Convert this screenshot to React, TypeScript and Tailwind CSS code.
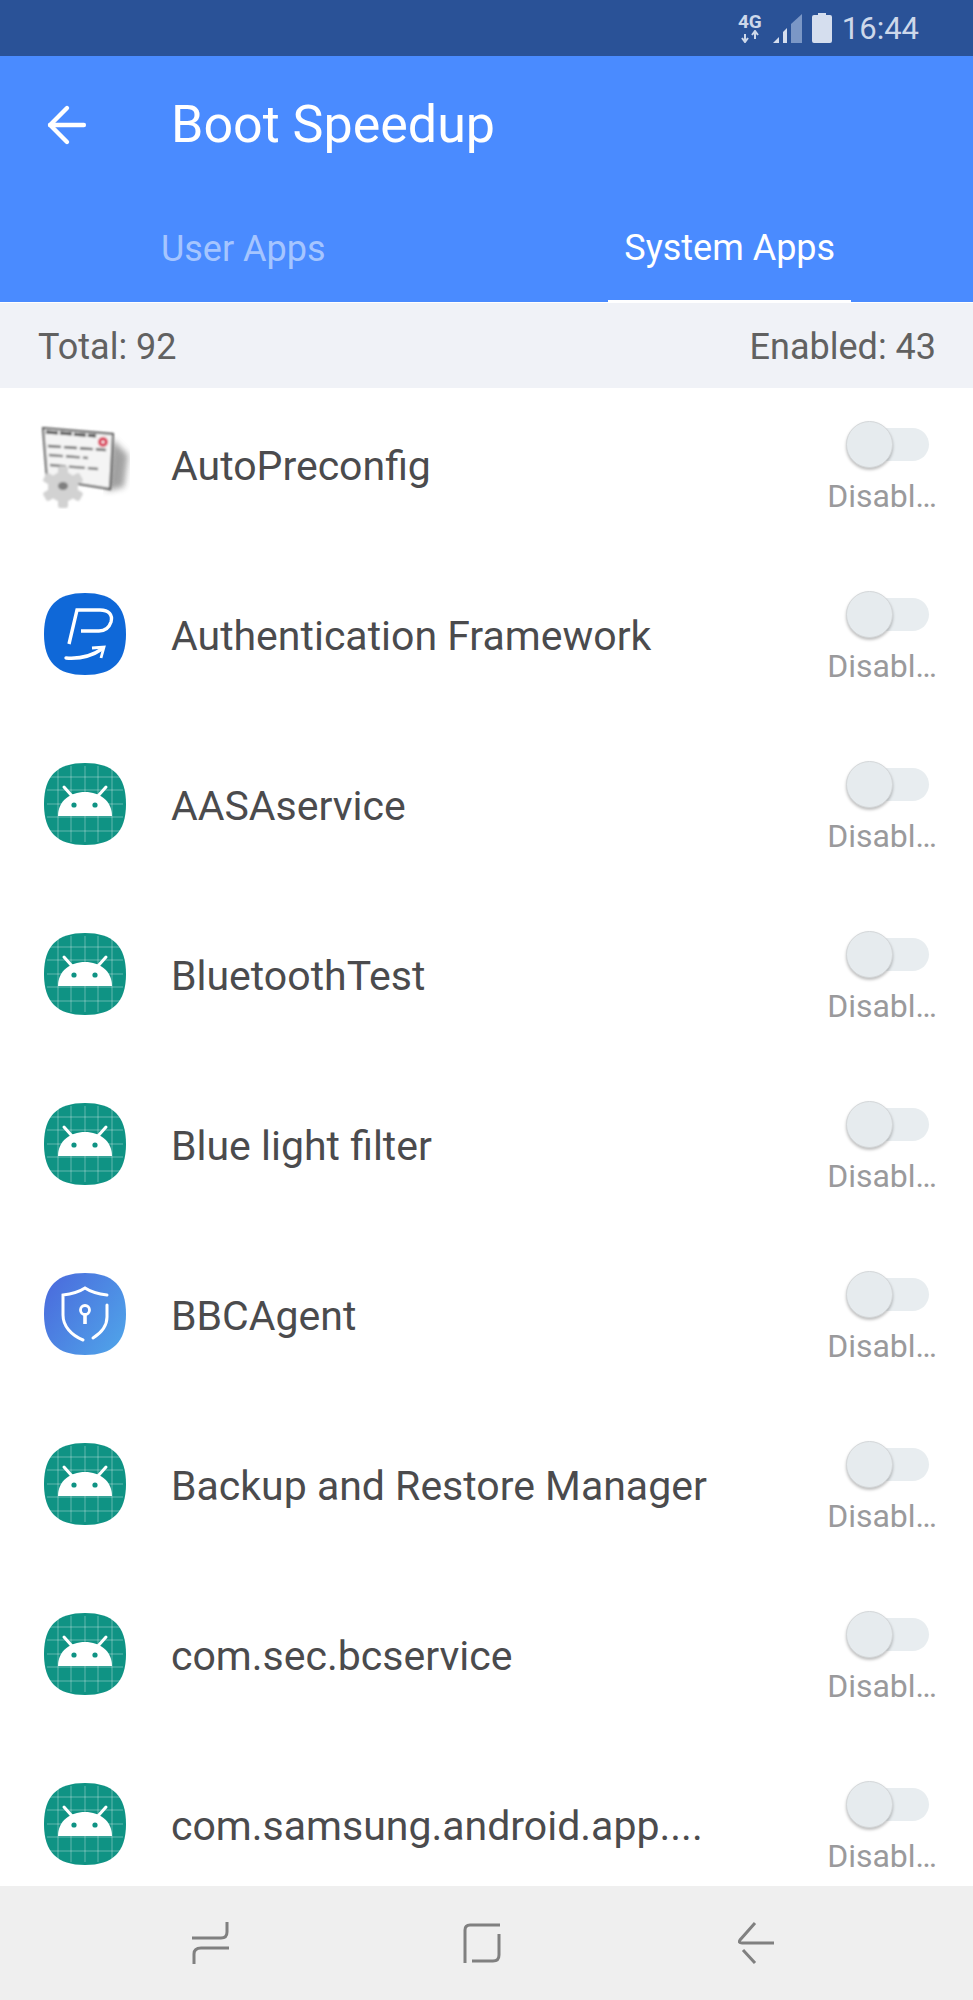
import { ArrowLeft } from 'lucide-react'

type IconKind = 'config' | 'auth' | 'android' | 'shield'

const apps: { name: string; icon: IconKind }[] = [
  { name: 'AutoPreconfig', icon: 'config' },
  { name: 'Authentication Framework', icon: 'auth' },
  { name: 'AASAservice', icon: 'android' },
  { name: 'BluetoothTest', icon: 'android' },
  { name: 'Blue light filter', icon: 'android' },
  { name: 'BBCAgent', icon: 'shield' },
  { name: 'Backup and Restore Manager', icon: 'android' },
  { name: 'com.sec.bcservice', icon: 'android' },
  { name: 'com.samsung.android.app....', icon: 'android' },
]

const SQUIRCLE = 'M41 0C69 0 82 13 82 41C82 69 69 82 41 82C13 82 0 69 0 41C0 13 13 0 41 0Z'

function AndroidIcon() {
  const lines = [14, 27, 41, 54, 68]
  return (
    <svg width="82" height="82" viewBox="0 0 82 82">
      <path d={SQUIRCLE} fill="#0f9384" />
      {lines.map((p) => (
        <g key={p} stroke="#ffffff" strokeOpacity="0.35" strokeWidth="1">
          <line x1={p} y1="3" x2={p} y2="79" />
          <line x1="3" y1={p} x2="79" y2={p} />
        </g>
      ))}
      <path d="M14 53C14 38 26 29 41 29C56 29 68 38 68 53Z" fill="#ffffff" />
      <path d="M20 24L28 33M62 24L54 33" stroke="#ffffff" strokeWidth="3" strokeLinecap="round" />
      <circle cx="30" cy="42" r="2.6" fill="#0f9384" />
      <circle cx="51" cy="42" r="2.6" fill="#0f9384" />
    </svg>
  )
}

function AuthIcon() {
  return (
    <svg width="82" height="82" viewBox="0 0 82 82">
      <path d={SQUIRCLE} fill="#0f68d8" />
      <path
        d="M25 51L33 17H56C65 17 69 22 67 29C65 35 61 38 55 38H37"
        fill="none"
        stroke="#ffffff"
        strokeWidth="3.4"
      />
      <path d="M22 65C35 66 48 63 58 56" fill="none" stroke="#ffffff" strokeWidth="3.4" strokeLinecap="round" />
      <path d="M48 55L60 54L57 65" fill="none" stroke="#ffffff" strokeWidth="2.8" />
    </svg>
  )
}

function ShieldIcon() {
  return (
    <svg width="82" height="82" viewBox="0 0 82 82">
      <defs>
        <linearGradient id="shieldBg" x1="0" y1="0" x2="1" y2="0.7">
          <stop offset="0" stopColor="#4a68dc" />
          <stop offset="1" stopColor="#4f9fe8" />
        </linearGradient>
      </defs>
      <path d={SQUIRCLE} fill="url(#shieldBg)" />
      <path
        d="M63 22C54 21 47 19 41 15C35 19 28 21 19 22V42C19 53 27 62 39 67"
        fill="none"
        stroke="#ffffff"
        strokeWidth="3"
        strokeLinecap="round"
      />
      <path d="M63 32V44C63 53 57 60 49 65" fill="none" stroke="#ffffff" strokeWidth="3" strokeLinecap="round" />
      <circle cx="41" cy="37" r="4.5" fill="none" stroke="#ffffff" strokeWidth="2.8" />
      <path d="M41 42V51" stroke="#ffffff" strokeWidth="3.6" />
    </svg>
  )
}

function ConfigIcon() {
  const teeth = [0, 60, 120, 180, 240, 300]
  return (
    <svg width="90" height="90" viewBox="0 0 90 90" className="-ml-1 -mr-1">
      <defs>
        <filter id="soft">
          <feGaussianBlur stdDeviation="0.8" />
        </filter>
        <filter id="softer">
          <feGaussianBlur stdDeviation="3" />
        </filter>
      </defs>
      <path d="M72 20L88 36L84 68L66 72Z" fill="#7a7a7a" opacity="0.7" filter="url(#softer)" />
      <g filter="url(#soft)">
        <path d="M3 9L73 15L70 70L7 60Z" fill="#f4f4f4" stroke="#555555" strokeWidth="2" />
        <path d="M6 13L56 17" stroke="#444444" strokeWidth="3" strokeDasharray="12 2" />
        <path d="M8 27L66 31" stroke="#666666" strokeWidth="2.4" strokeDasharray="13 3" />
        <path d="M9 36L48 39" stroke="#777777" strokeWidth="2.4" strokeDasharray="14 3" />
        <path d="M10 46L58 50" stroke="#777777" strokeWidth="2.4" strokeDasharray="16 3" />
        <circle cx="63" cy="23" r="5" fill="#d9405a" />
        <circle cx="63" cy="23" r="1.6" fill="#ffffff" />
        <g fill="#d2d2d2">
          {teeth.map((a) => (
            <rect key={a} x="18" y="47" width="10" height="12" rx="2.5" transform={`rotate(${a} 23 68)`} />
          ))}
          <circle cx="23" cy="68" r="15" />
        </g>
        <ellipse cx="23" cy="67" rx="5" ry="4" fill="#7f7f7f" />
      </g>
    </svg>
  )
}

function AppIcon({ kind }: { kind: IconKind }) {
  if (kind === 'config') return <ConfigIcon />
  if (kind === 'auth') return <AuthIcon />
  if (kind === 'shield') return <ShieldIcon />
  return <AndroidIcon />
}

function AppRow({ name, icon }: { name: string; icon: IconKind }) {
  return (
    <div className="flex h-[154px] shrink-0 items-center pl-[44px] pr-[36px]">
      <div className="-mt-[3px] flex w-[82px] shrink-0 items-center justify-center">
        <AppIcon kind={icon} />
      </div>
      <div className="ml-[45px] flex-1 truncate pt-[3px] text-[41px] text-[#4b4b4d]">{name}</div>
      <div className="flex flex-col items-end pt-[3px]">
        <div className="relative mr-[8px] h-[48px] w-[83px]">
          <div className="absolute left-[20px] right-0 top-[7px] h-[33px] rounded-full bg-[#e8edf0]" />
          <div className="absolute left-0 top-0 h-[47px] w-[47px] rounded-full border border-[#d4d7d9] bg-[#e6ebee] shadow-[0_2px_3px_rgba(0,0,0,0.25)]" />
        </div>
        <div className="mt-[10px] text-[32px] leading-[34px] text-[#9a9a9c]">Disabl…</div>
      </div>
    </div>
  )
}

function StatusBar() {
  return (
    <div className="flex h-[56px] items-center justify-end bg-[#2a5297] pr-[54px] text-[#cdd8ea]">
      <div className="mr-[11px] flex flex-col items-center">
        <span className="text-[19px] font-bold leading-[17px]">4G</span>
        <svg width="18" height="13" viewBox="0 0 18 13">
          <path d="M4 12V4M1 8L4 12L7 8M14 1V9M11 5L14 1L17 5" fill="none" stroke="#cdd8ea" strokeWidth="2" />
        </svg>
      </div>
      <svg width="29" height="30" viewBox="0 0 29 30" className="mt-[2px]">
        <path d="M0 29L6 23V29Z" fill="#d5deee" />
        <path d="M10 18L14 14V29H10Z" fill="#d5deee" />
        <path d="M18 10L29 0V29H18Z" fill="#7b97c6" />
      </svg>
      <svg width="20" height="30" viewBox="0 0 20 30" className="ml-[10px]">
        <path d="M6 0H14V2H18Q20 2 20 4V28Q20 30 18 30H2Q0 30 0 28V4Q0 2 2 2H6Z" fill="#d5deee" />
      </svg>
      <span className="ml-[10px] text-[31px] leading-none">16:44</span>
    </div>
  )
}

function NavBar() {
  const stroke = { fill: 'none', stroke: '#808080', strokeWidth: 3 }
  return (
    <div className="flex h-[114px] shrink-0 items-center bg-[#efefef] pl-[192px]">
      <svg width="38" height="42" viewBox="0 0 38 42">
        <path d="M0 16H29Q35 16 35 10V0M37 26H9Q2 26 2 32V42" {...stroke} />
      </svg>
      <svg width="38" height="40" viewBox="0 0 38 40" className="ml-[233px]">
        <path d="M2 40V7Q2 2 7 2H37M36 11V32Q36 38 30 38H9" {...stroke} />
      </svg>
      <svg width="36" height="42" viewBox="0 0 36 42" className="ml-[237px]">
        <path d="M17 1L2 18Q0 21 4 21H36M5 28L17 41" {...stroke} />
      </svg>
    </div>
  )
}

export default function App() {
  return (
    <div className="flex h-[2000px] w-[973px] flex-col overflow-hidden bg-white font-['Roboto',sans-serif]">
      <StatusBar />

      {/* Header */}
      <div className="h-[246px] shrink-0 bg-[#4a8bff] text-white">
        <div className="flex h-[138px] items-center pl-[38px]">
          <ArrowLeft size={58} strokeWidth={1.8} color="#ffffff" />
          <span className="ml-[75px] text-[52px]">Boot Speedup</span>
        </div>
        <div className="grid h-[108px] grid-cols-2 text-center text-[36px]">
          <div className="flex items-center justify-center pt-[2px] text-[#a5c5ff]">User Apps</div>
          <div className="flex justify-center">
            <div className="flex items-center border-b-2 border-white px-4 pt-[2px]">System Apps</div>
          </div>
        </div>
      </div>

      {/* Totals */}
      <div className="mt-px flex h-[85px] shrink-0 items-center justify-between bg-[#f0f2f7] pl-[38px] pr-[37px] pt-[2px] text-[36px] text-[#616161]">
        <span>Total: 92</span>
        <span>Enabled: 43</span>
      </div>

      {/* App list */}
      <div className="flex min-h-0 flex-1 flex-col gap-4 overflow-hidden">
        {apps.map((app) => (
          <AppRow key={app.name} name={app.name} icon={app.icon} />
        ))}
      </div>

      <NavBar />
    </div>
  )
}
